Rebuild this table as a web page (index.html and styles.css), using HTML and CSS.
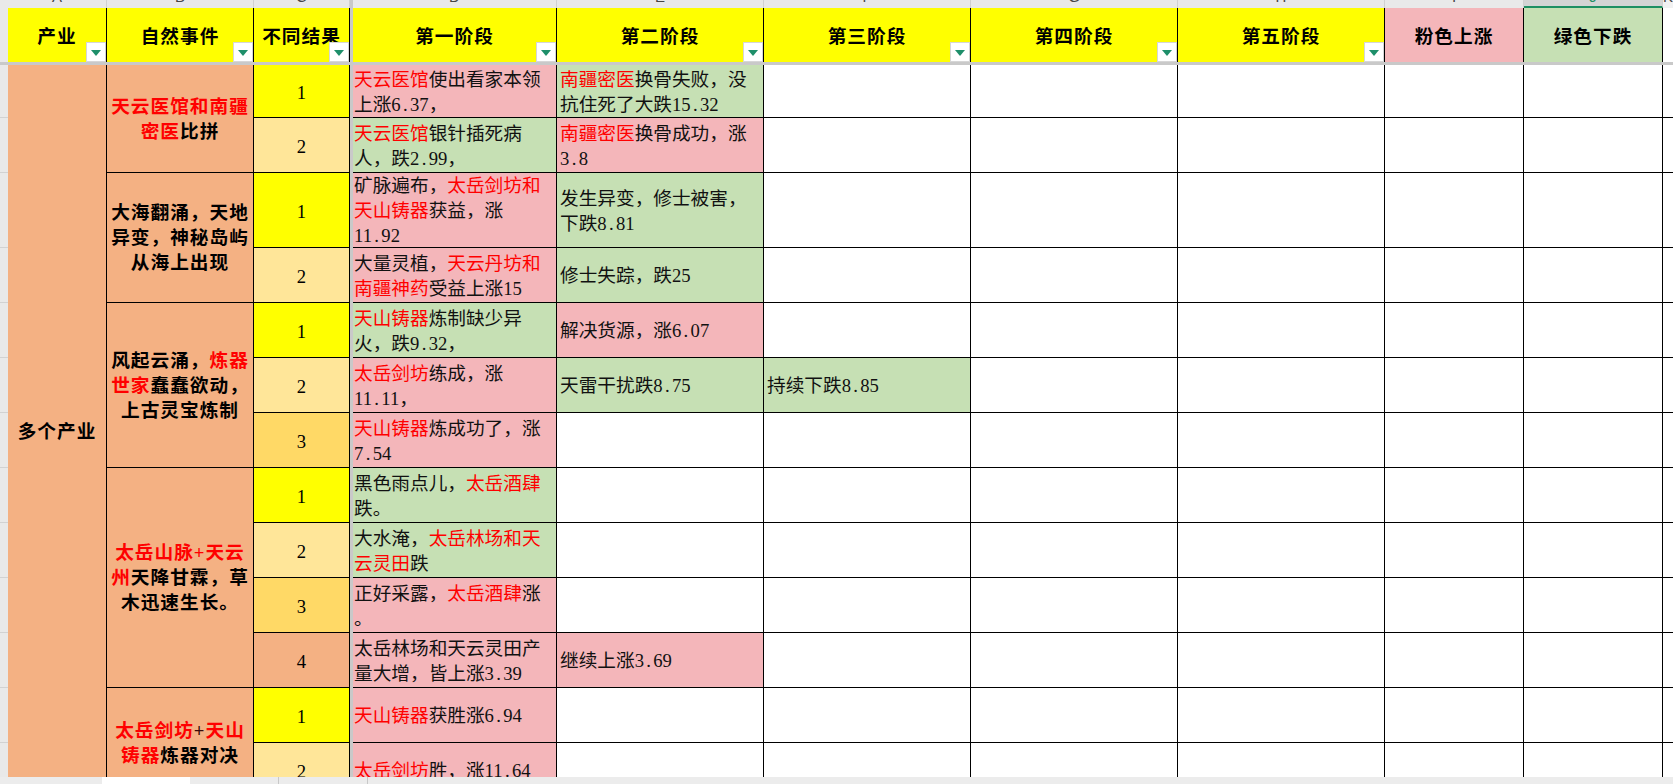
FILE: index.html
```html
<!DOCTYPE html>
<html lang="zh-CN">
<head>
<meta charset="utf-8">
<title>产业事件表</title>
<link rel="stylesheet" href="styles.css">
</head>
<body>
<div class="sheet">
  <div class="grid">
    <div class="fz-col"></div>
    <div class="fz-row"></div>

    <!-- column letters strip -->
    <div class="ch corner"></div>
    <div class="ch"><span>A</span></div>
    <div class="ch"><span>B</span></div>
    <div class="ch"><span>C</span></div>
    <div class="ch"><span>D</span></div>
    <div class="ch"><span>E</span></div>
    <div class="ch"><span>F</span></div>
    <div class="ch"><span>G</span></div>
    <div class="ch"><span>H</span></div>
    <div class="ch"><span>I</span></div>
    <div class="ch sel"><span>J</span></div>
    <div class="ch last"><span>K</span></div>

    <!-- header row -->
    <div class="rh head-rh"></div>
    <div class="hd yel"><div class="t">产业</div><i class="flt"></i></div>
    <div class="hd yel"><div class="t">自然事件</div><i class="flt"></i></div>
    <div class="hd yel"><div class="t">不同结果</div><i class="flt"></i></div>
    <div class="hd yel"><div class="t">第一阶段</div><i class="flt"></i></div>
    <div class="hd yel"><div class="t">第二阶段</div><i class="flt"></i></div>
    <div class="hd yel"><div class="t">第三阶段</div><i class="flt"></i></div>
    <div class="hd yel"><div class="t">第四阶段</div><i class="flt"></i></div>
    <div class="hd yel"><div class="t">第五阶段</div><i class="flt"></i></div>
    <div class="hd pink"><div class="t">粉色上涨</div></div>
    <div class="hd green"><div class="t">绿色下跌</div></div>
    <div class="hd kcol"></div>

    <!-- data row 1 -->
    <div class="rh"></div>
    <div class="c ind span13"><div class="t">多个产业</div></div>
    <div class="c ev span2"><div class="t"><span class="r">天云医馆和南疆</span><br><span class="r">密医</span>比拼</div></div>
    <div class="c num yel"><div class="t">1</div></div>
    <div class="c tx d pink"><div class="t"><span class="r">天云医馆</span>使出看家本领<br>上涨6<span class="p">.</span>37，</div></div>
    <div class="c tx green"><div class="t"><span class="r">南疆密医</span>换骨失败，没<br>抗住死了大跌15<span class="p">.</span>32</div></div>
    <div class="c"></div><div class="c"></div><div class="c"></div><div class="c"></div><div class="c"></div>
    <div class="c k"></div>

    <!-- data row 2 -->
    <div class="rh"></div>
    <div class="c num lyel"><div class="t">2</div></div>
    <div class="c tx d green"><div class="t"><span class="r">天云医馆</span>银针插死病<br>人，跌2<span class="p">.</span>99，</div></div>
    <div class="c tx pink"><div class="t"><span class="r">南疆密医</span>换骨成功，涨<br>3<span class="p">.</span>8</div></div>
    <div class="c"></div><div class="c"></div><div class="c"></div><div class="c"></div><div class="c"></div>
    <div class="c k"></div>

    <!-- data row 3 -->
    <div class="rh"></div>
    <div class="c ev span2"><div class="t">大海翻涌，天地<br>异变，神秘岛屿<br>从海上出现</div></div>
    <div class="c num yel"><div class="t">1</div></div>
    <div class="c tx d pink"><div class="t">矿脉遍布，<span class="r">太岳剑坊和</span><br><span class="r">天山铸器</span>获益，涨<br>11<span class="p">.</span>92</div></div>
    <div class="c tx green"><div class="t">发生异变，修士被害，<br>下跌8<span class="p">.</span>81</div></div>
    <div class="c"></div><div class="c"></div><div class="c"></div><div class="c"></div><div class="c"></div>
    <div class="c k"></div>

    <!-- data row 4 -->
    <div class="rh"></div>
    <div class="c num lyel"><div class="t">2</div></div>
    <div class="c tx d pink"><div class="t">大量灵植，<span class="r">天云丹坊和</span><br><span class="r">南疆神药</span>受益上涨15</div></div>
    <div class="c tx green"><div class="t">修士失踪，跌25</div></div>
    <div class="c"></div><div class="c"></div><div class="c"></div><div class="c"></div><div class="c"></div>
    <div class="c k"></div>

    <!-- data row 5 -->
    <div class="rh"></div>
    <div class="c ev span3"><div class="t">风起云涌，<span class="r">炼器</span><br><span class="r">世家</span>蠢蠢欲动，<br>上古灵宝炼制</div></div>
    <div class="c num yel"><div class="t">1</div></div>
    <div class="c tx d green"><div class="t"><span class="r">天山铸器</span>炼制缺少异<br>火，跌9<span class="p">.</span>32，</div></div>
    <div class="c tx pink"><div class="t">解决货源，涨6<span class="p">.</span>07</div></div>
    <div class="c"></div><div class="c"></div><div class="c"></div><div class="c"></div><div class="c"></div>
    <div class="c k"></div>

    <!-- data row 6 -->
    <div class="rh"></div>
    <div class="c num lyel"><div class="t">2</div></div>
    <div class="c tx d pink"><div class="t"><span class="r">太岳剑坊</span>练成，涨<br>11<span class="p">.</span>11，</div></div>
    <div class="c tx green"><div class="t">天雷干扰跌8<span class="p">.</span>75</div></div>
    <div class="c tx green"><div class="t">持续下跌8<span class="p">.</span>85</div></div>
    <div class="c"></div><div class="c"></div><div class="c"></div><div class="c"></div>
    <div class="c k"></div>

    <!-- data row 7 -->
    <div class="rh"></div>
    <div class="c num gold"><div class="t">3</div></div>
    <div class="c tx d pink"><div class="t"><span class="r">天山铸器</span>炼成功了，涨<br>7<span class="p">.</span>54</div></div>
    <div class="c"></div><div class="c"></div><div class="c"></div><div class="c"></div><div class="c"></div><div class="c"></div>
    <div class="c k"></div>

    <!-- data row 8 -->
    <div class="rh"></div>
    <div class="c ev span4"><div class="t"><span class="r">太岳山脉+天云</span><br><span class="r">州</span>天降甘霖，草<br>木迅速生长。</div></div>
    <div class="c num yel"><div class="t">1</div></div>
    <div class="c tx d green"><div class="t">黑色雨点儿，<span class="r">太岳酒肆</span><br>跌。</div></div>
    <div class="c"></div><div class="c"></div><div class="c"></div><div class="c"></div><div class="c"></div><div class="c"></div>
    <div class="c k"></div>

    <!-- data row 9 -->
    <div class="rh"></div>
    <div class="c num lyel"><div class="t">2</div></div>
    <div class="c tx d green"><div class="t">大水淹，<span class="r">太岳林场和天</span><br><span class="r">云灵田</span>跌</div></div>
    <div class="c"></div><div class="c"></div><div class="c"></div><div class="c"></div><div class="c"></div><div class="c"></div>
    <div class="c k"></div>

    <!-- data row 10 -->
    <div class="rh"></div>
    <div class="c num gold"><div class="t">3</div></div>
    <div class="c tx d pink"><div class="t">正好采露，<span class="r">太岳酒肆</span>涨<br>。</div></div>
    <div class="c"></div><div class="c"></div><div class="c"></div><div class="c"></div><div class="c"></div><div class="c"></div>
    <div class="c k"></div>

    <!-- data row 11 -->
    <div class="rh"></div>
    <div class="c num orng"><div class="t">4</div></div>
    <div class="c tx d pink"><div class="t">太岳林场和天云灵田产<br>量大增，皆上涨3<span class="p">.</span>39</div></div>
    <div class="c tx pink"><div class="t">继续上涨3<span class="p">.</span>69</div></div>
    <div class="c"></div><div class="c"></div><div class="c"></div><div class="c"></div><div class="c"></div>
    <div class="c k"></div>

    <!-- data row 12 -->
    <div class="rh"></div>
    <div class="c ev span2"><div class="t"><span class="r">太岳剑坊</span><span class="r2">+</span><span class="r">天山</span><br><span class="r">铸器</span>炼器对决</div></div>
    <div class="c num yel"><div class="t">1</div></div>
    <div class="c tx d pink"><div class="t"><span class="r">天山铸器</span>获胜涨6<span class="p">.</span>94</div></div>
    <div class="c"></div><div class="c"></div><div class="c"></div><div class="c"></div><div class="c"></div><div class="c"></div>
    <div class="c k"></div>

    <!-- data row 13 -->
    <div class="rh"></div>
    <div class="c num lyel"><div class="t">2</div></div>
    <div class="c tx d pink"><div class="t"><span class="r">太岳剑坊</span>胜，涨11<span class="p">.</span>64</div></div>
    <div class="c"></div><div class="c"></div><div class="c"></div><div class="c"></div><div class="c"></div><div class="c"></div>
    <div class="c k"></div>
  </div>
</div>
<div class="tabs">
  <div class="tab"></div>
  <div class="tab active"></div>
  <div class="tab sep"></div>
  <div class="tab sep"></div>
  <div class="tab rest"></div>
</div>
</body>
</html>
```

FILE: styles.css
```css
* { box-sizing: border-box; }

html, body {
  margin: 0;
  padding: 0;
  background: #ffffff;
  width: 1673px;
  height: 784px;
  overflow: hidden;
}

body {
  font-family: "Liberation Serif", "Noto Sans CJK SC", serif;
  font-size: 18.67px;
  line-height: 25px;
  color: #000;
}

.sheet {
  height: 777px;
  overflow: hidden;
}

.grid {
  display: grid;
  grid-template-columns: 8px 99px 147px 96px 3px 204px 207px 207px 207px 207px 139px 139px 10px;
  grid-template-rows: 8px 54px 3px 53px 55px 75px repeat(10, 55px);
}

/* freeze panes */
.fz-col {
  grid-column: 5;
  grid-row: 1 / -1;
  background: #c9c9c9;
}
.fz-row {
  grid-row: 3;
  grid-column: 1 / -1;
  background: #c9c9c9;
}

/* column letter strip */
.ch {
  background: #e9e9e9;
  border-right: 1px solid #d0d0d0;
  overflow: hidden;
}
.ch span {
  display: block;
  margin-top: -11px;
  font-family: "Liberation Sans", sans-serif;
  font-size: 15px;
  line-height: 16px;
  text-align: center;
  color: #444;
}
.ch.corner { border-right: none; }
.ch.sel {
  background: #d4d4d4;
  border-bottom: 2px solid #1e8f62;
}
.ch.sel span { color: #1e8f62; }
.ch.last { background: #f1f1f1; border-right: none; }

/* row header strip */
.rh {
  background: #e9e9e9;
  border-bottom: 1px solid #d2d2d2;
}
.head-rh { border-bottom: none; }

/* header cells */
.hd {
  position: relative;
  display: flex;
  align-items: center;
  justify-content: center;
  border-right: 1px solid #000;
  font-weight: 700;
  letter-spacing: 1px;
  padding-top: 2px;
}
.hd.kcol { border-right: none; background: #fff; }
.flt {
  position: absolute;
  right: 0;
  bottom: 0;
  width: 20px;
  height: 20px;
  background: #fff;
  border: 1px solid #d6d6d6;
  display: flex;
  align-items: center;
  justify-content: center;
}
.flt::after {
  content: "";
  width: 0;
  height: 0;
  border-left: 5px solid transparent;
  border-right: 5px solid transparent;
  border-top: 6px solid #1e8f6a;
  margin-top: 1px;
}

/* data cells */
.c {
  display: flex;
  align-items: center;
  border-right: 1px solid #000;
  border-bottom: 1px solid #000;
  background: #fff;
  white-space: nowrap;
  overflow: hidden;
}
.c.k { border-right: none; }

.ind {
  justify-content: center;
  background: #f4b183;
  font-weight: 700;
  letter-spacing: 1px;
}
.ev {
  justify-content: center;
  text-align: center;
  background: #f4b183;
  font-weight: 700;
  letter-spacing: 1px;
}
.num {
  justify-content: center;
  padding-top: 2px;
}
.tx { padding-left: 3px; padding-top: 1px; color: #111; }
.tx.d { padding-left: 1px; }

/* half-width period like a fixed-width CJK font */
.p {
  display: inline-block;
  width: 9.33px;
  text-align: center;
}

.span13 { grid-row: span 13; }
.span2 { grid-row: span 2; }
.span3 { grid-row: span 3; }
.span4 { grid-row: span 4; }

.r { color: #ff0000; }
.r2 { color: #3a0a0a; }

/* fills */
.yel { background: #ffff00; }
.lyel { background: #ffe699; }
.gold { background: #ffd966; }
.orng { background: #f4b183; }
.pink { background: #f4b6ba; }
.green { background: #c6e0b4; }

/* sheet tabs bar */
.tabs {
  height: 7px;
  display: flex;
  background: #ececec;
}
.tab {
  height: 7px;
  width: 102px;
  background: #ececec;
}
.tab.active {
  width: 88px;
  background: #ffffff;
}
.tab.sep {
  width: 89px;
  border-right: 1px solid #c8c8c8;
}
.tab.rest { flex: 1; }
```
